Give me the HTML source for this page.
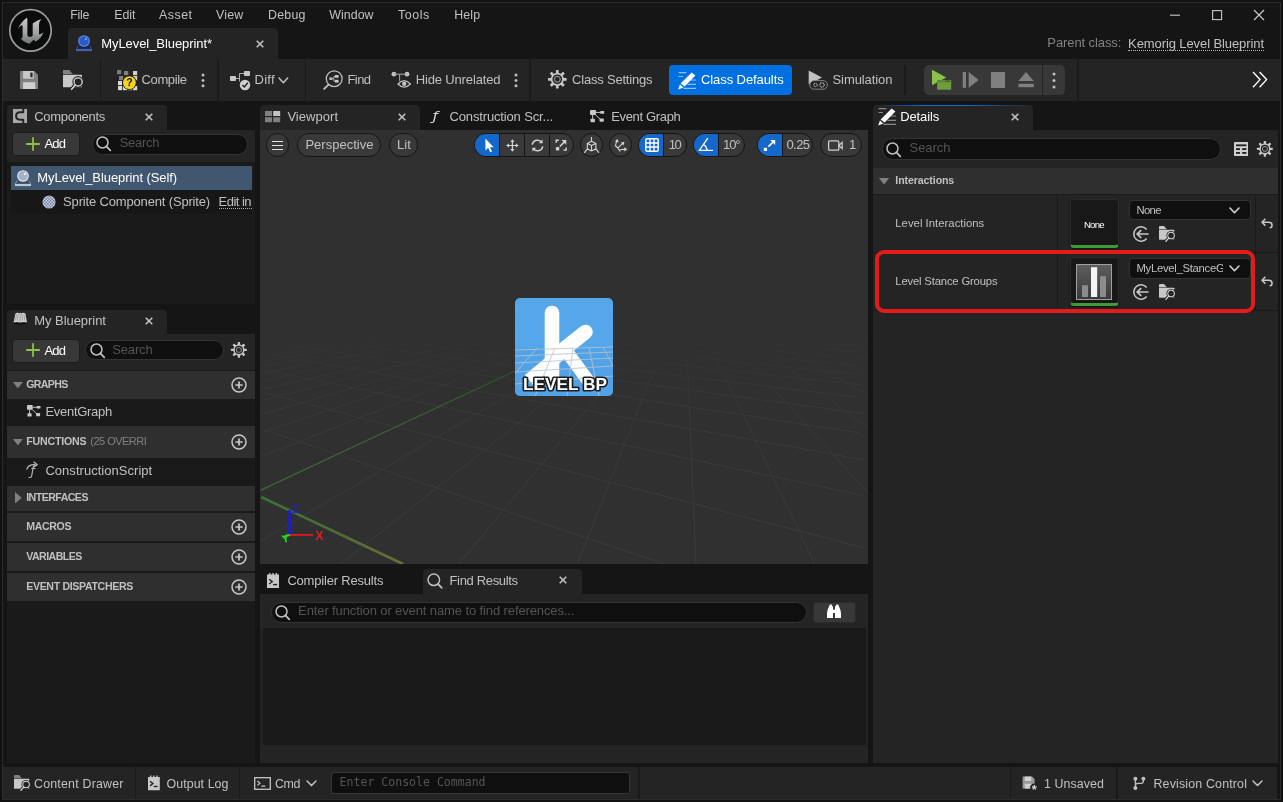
<!DOCTYPE html>
<html lang="en"><head><meta charset="utf-8"><title>MyLevel_Blueprint</title>
<style>
html,body{margin:0;padding:0;background:#111;}
body{width:1283px;height:802px;position:relative;overflow:hidden;font-family:"Liberation Sans",sans-serif;}
#app{position:absolute;left:0;top:0;width:1283px;height:802px;overflow:hidden;will-change:transform;}
#app div,#app span.t,#app svg{position:absolute;box-sizing:border-box;}
span.t{white-space:pre;display:block;}
</style></head><body><div id="app">
<div style="left:2px;top:2px;width:1279px;height:798px;background:#151515;border:1px solid #2c2c2c;"></div>
<span class="t" style="left:70.30px;top:9.00px;font-size:12.4px;line-height:12.4px;color:#c0c0c0;font-weight:400;letter-spacing:-0.327px;">File</span>
<span class="t" style="left:114.20px;top:9.00px;font-size:12.4px;line-height:12.4px;color:#c0c0c0;font-weight:400;letter-spacing:-0.056px;">Edit</span>
<span class="t" style="left:159.10px;top:9.00px;font-size:12.4px;line-height:12.4px;color:#c0c0c0;font-weight:400;letter-spacing:0.472px;">Asset</span>
<span class="t" style="left:216.00px;top:9.00px;font-size:12.4px;line-height:12.4px;color:#c0c0c0;font-weight:400;letter-spacing:0.182px;">View</span>
<span class="t" style="left:268.10px;top:9.00px;font-size:12.4px;line-height:12.4px;color:#c0c0c0;font-weight:400;letter-spacing:0.215px;">Debug</span>
<span class="t" style="left:329.20px;top:9.00px;font-size:12.4px;line-height:12.4px;color:#c0c0c0;font-weight:400;letter-spacing:0.059px;">Window</span>
<span class="t" style="left:398.00px;top:9.00px;font-size:12.4px;line-height:12.4px;color:#c0c0c0;font-weight:400;letter-spacing:0.588px;">Tools</span>
<span class="t" style="left:454.20px;top:9.00px;font-size:12.4px;line-height:12.4px;color:#c0c0c0;font-weight:400;letter-spacing:0.132px;">Help</span>
<div style="left:68px;top:28px;width:210px;height:31px;background:#242424;border-radius:4px 4px 0 0;"></div>
<span class="t" style="left:101.30px;top:37.00px;font-size:13px;line-height:13px;color:#ffffff;font-weight:400;letter-spacing:-0.077px;">MyLevel_Blueprint*</span>
<span class="t" style="left:1047.30px;top:36.00px;font-size:13px;line-height:13px;color:#828282;font-weight:400;letter-spacing:-0.087px;">Parent class:</span>
<span class="t" style="left:1128.10px;top:37.00px;font-size:13px;line-height:13px;color:#c0c0c0;font-weight:400;letter-spacing:-0.096px;">Kemorig Level Blueprint</span>
<div style="left:1128px;top:50px;width:136px;height:1px;background:transparent;border-top:1px dotted #b0b0b0;"></div>
<div style="left:3px;top:59px;width:1277px;height:42px;background:#242424;"></div>
<div style="left:99.5px;top:59px;width:1.5px;height:42px;background:#1a1a1a;"></div>
<div style="left:217px;top:59px;width:1.5px;height:42px;background:#1a1a1a;"></div>
<div style="left:304.9px;top:59px;width:1.5px;height:42px;background:#1a1a1a;"></div>
<div style="left:529.3px;top:59px;width:1.5px;height:42px;background:#1a1a1a;"></div>
<div style="left:1077.3px;top:59px;width:1.5px;height:42px;background:#1a1a1a;"></div>
<div style="left:904px;top:65px;width:1.5px;height:30px;background:#1a1a1a;"></div>
<span class="t" style="left:141.50px;top:73.00px;font-size:13px;line-height:13px;color:#c0c0c0;font-weight:400;letter-spacing:-0.364px;">Compile</span>
<span class="t" style="left:254.50px;top:73.00px;font-size:13px;line-height:13px;color:#c0c0c0;font-weight:400;letter-spacing:0.245px;">Diff</span>
<span class="t" style="left:347.50px;top:73.00px;font-size:13px;line-height:13px;color:#c0c0c0;font-weight:400;letter-spacing:-0.596px;">Find</span>
<span class="t" style="left:415.70px;top:73.00px;font-size:13px;line-height:13px;color:#c0c0c0;font-weight:400;letter-spacing:-0.147px;">Hide Unrelated</span>
<span class="t" style="left:572.00px;top:73.00px;font-size:13px;line-height:13px;color:#c0c0c0;font-weight:400;letter-spacing:-0.199px;">Class Settings</span>
<div style="left:669px;top:65px;width:123px;height:30px;background:#0070e0;border-radius:4px;"></div>
<span class="t" style="left:701.00px;top:73.00px;font-size:13px;line-height:13px;color:#ffffff;font-weight:400;letter-spacing:-0.085px;">Class Defaults</span>
<span class="t" style="left:832.50px;top:73.00px;font-size:13px;line-height:13px;color:#c0c0c0;font-weight:400;letter-spacing:-0.077px;">Simulation</span>
<div style="left:924px;top:65px;width:141px;height:30px;background:#383838;border-radius:5px;"></div>
<div style="left:1042px;top:65px;width:1px;height:30px;background:#242424;"></div>
<div style="left:7px;top:105px;width:160px;height:25px;background:#242424;border-radius:4px 4px 0 0;"></div>
<span class="t" style="left:34.20px;top:110.00px;font-size:13px;line-height:13px;color:#c0c0c0;font-weight:400;letter-spacing:-0.290px;">Components</span>
<div style="left:7px;top:130px;width:248px;height:32px;background:#242424;"></div>
<div style="left:7px;top:162px;width:248px;height:142px;background:#1a1a1a;"></div>
<div style="left:11.5px;top:132.0px;width:68.5px;height:24px;background:#383838;border-radius:4px;border:1px solid #1c1c1c;"></div>
<span class="t" style="left:44.40px;top:137.00px;font-size:13px;line-height:13px;color:#ffffff;font-weight:400;letter-spacing:-0.716px;">Add</span>
<div style="left:92px;top:134px;width:156px;height:20.5px;background:#0f0f0f;border-radius:10.25px;border:1px solid #333;"></div>
<span class="t" style="left:119.70px;top:136.00px;font-size:13px;line-height:13px;color:#545454;font-weight:400;letter-spacing:-0.258px;">Search</span>
<div style="left:11px;top:166px;width:240.5px;height:24px;background:#40576f;"></div>
<span class="t" style="left:37.30px;top:171.00px;font-size:13px;line-height:13px;color:#ffffff;font-weight:400;letter-spacing:-0.075px;">MyLevel_Blueprint (Self)</span>
<div style="left:11px;top:190px;width:240.5px;height:24px;background:#171717;"></div>
<span class="t" style="left:63.10px;top:195.00px;font-size:13px;line-height:13px;color:#c0c0c0;font-weight:400;letter-spacing:-0.163px;">Sprite Component (Sprite)</span>
<span class="t" style="left:218.50px;top:195.00px;font-size:13px;line-height:13px;color:#c0c0c0;font-weight:400;letter-spacing:-0.505px;width:33px;overflow:hidden;">Edit in</span>
<div style="left:218.5px;top:208px;width:33px;height:1px;background:transparent;border-top:1px dotted #b0b0b0;"></div>
<div style="left:7px;top:309.5px;width:160px;height:24.5px;background:#242424;border-radius:4px 4px 0 0;"></div>
<span class="t" style="left:34.20px;top:314.00px;font-size:13px;line-height:13px;color:#c0c0c0;font-weight:400;letter-spacing:-0.041px;">My Blueprint</span>
<div style="left:7px;top:334px;width:248px;height:37px;background:#242424;"></div>
<div style="left:7px;top:369.5px;width:248px;height:393.5px;background:#1a1a1a;"></div>
<div style="left:11.5px;top:338.5px;width:68.5px;height:24.5px;background:#383838;border-radius:4px;border:1px solid #1c1c1c;"></div>
<span class="t" style="left:44.40px;top:344.00px;font-size:13px;line-height:13px;color:#ffffff;font-weight:400;letter-spacing:-0.716px;">Add</span>
<div style="left:84.8px;top:339.8px;width:139.6px;height:20.7px;background:#0f0f0f;border-radius:10.35px;border:1px solid #333;"></div>
<span class="t" style="left:112.20px;top:343.00px;font-size:13px;line-height:13px;color:#545454;font-weight:400;letter-spacing:-0.138px;">Search</span>
<div style="left:7px;top:371px;width:248px;height:28px;background:#2f2f2f;"></div>
<span class="t" style="left:26.20px;top:379.00px;font-size:10.6px;line-height:10.6px;color:#c0c0c0;font-weight:700;letter-spacing:-0.650px;">GRAPHS</span>
<span class="t" style="left:45.40px;top:405.00px;font-size:13px;line-height:13px;color:#c0c0c0;font-weight:400;letter-spacing:-0.286px;">EventGraph</span>
<div style="left:7px;top:426px;width:248px;height:32px;background:#2f2f2f;"></div>
<span class="t" style="left:26.20px;top:436.00px;font-size:10.6px;line-height:10.6px;color:#c0c0c0;font-weight:700;letter-spacing:-0.179px;">FUNCTIONS</span>
<span class="t" style="left:90.30px;top:436.00px;font-size:11px;line-height:11px;color:#808080;font-weight:400;letter-spacing:-0.525px;">(25 OVERRI</span>
<span class="t" style="left:45.40px;top:464.00px;font-size:13px;line-height:13px;color:#c0c0c0;font-weight:400;letter-spacing:0.035px;">ConstructionScript</span>
<div style="left:7px;top:485.5px;width:248px;height:25px;background:#2f2f2f;"></div>
<span class="t" style="left:26.20px;top:492.00px;font-size:10.6px;line-height:10.6px;color:#c0c0c0;font-weight:700;letter-spacing:-0.538px;">INTERFACES</span>
<div style="left:7px;top:513px;width:248px;height:28px;background:#2f2f2f;"></div>
<span class="t" style="left:26.20px;top:521.00px;font-size:10.6px;line-height:10.6px;color:#c0c0c0;font-weight:700;letter-spacing:-0.342px;">MACROS</span>
<div style="left:7px;top:543px;width:248px;height:28px;background:#2f2f2f;"></div>
<span class="t" style="left:26.20px;top:551.00px;font-size:10.6px;line-height:10.6px;color:#c0c0c0;font-weight:700;letter-spacing:-0.545px;">VARIABLES</span>
<div style="left:7px;top:573px;width:248px;height:28px;background:#2f2f2f;"></div>
<span class="t" style="left:26.20px;top:581.00px;font-size:10.6px;line-height:10.6px;color:#c0c0c0;font-weight:700;letter-spacing:-0.343px;">EVENT DISPATCHERS</span>
<div style="left:260px;top:105px;width:160px;height:25px;background:#242424;border-radius:4px 4px 0 0;"></div>
<span class="t" style="left:287.40px;top:110.00px;font-size:13px;line-height:13px;color:#c0c0c0;font-weight:400;letter-spacing:0.037px;">Viewport</span>
<span class="t" style="left:449.50px;top:110.00px;font-size:13px;line-height:13px;color:#c0c0c0;font-weight:400;letter-spacing:-0.151px;">Construction Scr...</span>
<span class="t" style="left:611.20px;top:110.00px;font-size:13px;line-height:13px;color:#c0c0c0;font-weight:400;letter-spacing:-0.339px;">Event Graph</span>
<div style="left:260px;top:130px;width:608px;height:434px;background:#303030;"></div>
<svg style="left:260px;top:160px;" width="608" height="404" viewBox="0 0 608 404"><defs><linearGradient id="fade" x1="0" y1="0" x2="0" y2="1"><stop offset="0" stop-color="#fff" stop-opacity="0"/><stop offset="0.38" stop-color="#fff" stop-opacity="0"/><stop offset="0.62" stop-color="#fff" stop-opacity="0.75"/><stop offset="1" stop-color="#fff" stop-opacity="1"/></linearGradient><mask id="fm" maskUnits="userSpaceOnUse" x="0" y="0" width="608" height="404"><rect x="0" y="0" width="608" height="404" fill="url(#fade)"/></mask><linearGradient id="gy" gradientUnits="userSpaceOnUse" x1="0" y1="336" x2="150" y2="404"><stop offset="0" stop-color="#3f8a3a"/><stop offset="0.5" stop-color="#5a843a"/><stop offset="1" stop-color="#8a8440"/></linearGradient></defs><g mask="url(#fm)"><g stroke="#3e3e3e" stroke-width="1" opacity="0.9"><line x1="384.5" y1="136.9" x2="3.9" y2="188.6"/><line x1="386.9" y1="136.9" x2="0.6" y2="192.7"/><line x1="389.3" y1="136.9" x2="0.7" y2="196.8"/><line x1="391.6" y1="136.9" x2="4.5" y2="200.9"/><line x1="394.0" y1="136.9" x2="4.1" y2="206.4"/><line x1="396.4" y1="136.9" x2="1.4" y2="213.2"/><line x1="398.8" y1="136.9" x2="4.7" y2="220.0"/><line x1="401.1" y1="136.9" x2="2.1" y2="229.5"/><line x1="403.5" y1="136.9" x2="2.6" y2="240.4"/><line x1="405.9" y1="136.9" x2="3.1" y2="254.1"/><line x1="408.2" y1="136.9" x2="3.3" y2="271.8"/><line x1="410.6" y1="136.9" x2="1.3" y2="296.3"/><line x1="415.3" y1="136.9" x2="1.3" y2="380.8"/><line x1="417.7" y1="136.9" x2="80.5" y2="404.0"/><line x1="420.1" y1="136.9" x2="199.0" y2="404.0"/><line x1="422.5" y1="136.9" x2="317.5" y2="404.0"/><line x1="424.8" y1="136.9" x2="436.0" y2="404.0"/><line x1="427.2" y1="136.9" x2="554.5" y2="404.0"/><line x1="429.6" y1="136.9" x2="608.4" y2="333.1"/><line x1="431.9" y1="136.9" x2="608.0" y2="267.7"/><line x1="434.3" y1="136.9" x2="606.6" y2="233.6"/><line x1="436.7" y1="136.9" x2="605.8" y2="213.2"/><line x1="439.0" y1="136.9" x2="605.2" y2="199.5"/><line x1="441.4" y1="136.9" x2="605.4" y2="190.0"/><line x1="443.8" y1="136.9" x2="606.9" y2="183.2"/><line x1="3.6" y1="269.9" x2="405.0" y2="404.0"/><line x1="3.4" y1="232.6" x2="603.5" y2="387.6"/><line x1="1.5" y1="208.8" x2="603.3" y2="335.5"/><line x1="8.0" y1="193.9" x2="603.7" y2="299.7"/><line x1="7.7" y1="182.0" x2="599.4" y2="272.9"/><line x1="8.4" y1="173.1" x2="603.0" y2="253.5"/><line x1="5.8" y1="165.6" x2="597.2" y2="237.1"/><line x1="3.7" y1="159.6" x2="603.4" y2="225.2"/><line x1="6.0" y1="155.2" x2="603.6" y2="214.8"/><line x1="0.5" y1="150.7" x2="601.8" y2="205.8"/><line x1="4.7" y1="147.7" x2="601.7" y2="198.4"/><line x1="3.6" y1="144.7" x2="607.5" y2="192.4"/><line x1="17.5" y1="143.2" x2="602.7" y2="186.5"/><line x1="7.3" y1="140.3" x2="587.5" y2="180.5"/><line x1="14.6" y1="138.8" x2="607.4" y2="177.5"/><line x1="19.3" y1="137.3" x2="598.0" y2="173.1"/><line x1="46.8" y1="137.3" x2="606.1" y2="170.1"/><line x1="74.3" y1="137.3" x2="582.2" y2="165.6"/><line x1="101.8" y1="137.3" x2="606.6" y2="164.1"/><line x1="129.4" y1="137.3" x2="599.0" y2="161.1"/><line x1="156.9" y1="137.3" x2="586.1" y2="158.1"/><line x1="184.4" y1="137.3" x2="600.0" y2="156.7"/><line x1="211.9" y1="137.3" x2="578.0" y2="153.7"/><line x1="239.4" y1="137.3" x2="585.3" y2="152.2"/><line x1="266.9" y1="137.3" x2="590.0" y2="150.7"/><line x1="294.4" y1="137.3" x2="592.1" y2="149.2"/><line x1="321.9" y1="137.3" x2="591.6" y2="147.7"/><line x1="349.4" y1="137.3" x2="588.4" y2="146.2"/><line x1="376.9" y1="137.3" x2="582.6" y2="144.7"/><line x1="404.4" y1="137.3" x2="574.2" y2="143.2"/><line x1="432.0" y1="137.3" x2="607.0" y2="143.2"/><line x1="459.5" y1="137.3" x2="594.7" y2="141.8"/><line x1="487.0" y1="137.3" x2="579.7" y2="140.3"/><line x1="514.5" y1="137.3" x2="562.2" y2="138.8"/><line x1="542.0" y1="137.3" x2="591.0" y2="138.8"/><line x1="569.5" y1="137.3" x2="569.5" y2="137.3"/><line x1="597.0" y1="137.3" x2="597.0" y2="137.3"/></g><line x1="413.0" y1="136.9" x2="0.4" y2="330.4" stroke="#3f6e3a" stroke-width="1.3"/></g><line x1="1.2" y1="337.0" x2="143.0" y2="404.0" stroke="url(#gy)" stroke-width="2.6" opacity="0.72"/></svg>
<svg style="left:278px;top:500px;" width="50" height="46" viewBox="0 0 50 46"><path d="M11.8 34.5V10" stroke="#1d1dd0" stroke-width="3"/><path d="M12 34.9H35" stroke="#d81a1a" stroke-width="1.9"/><path d="M12 35L5.4 36.6" stroke="#22e022" stroke-width="2"/><text x="14.6" y="13.2" font-family="Liberation Sans, sans-serif" font-weight="700" font-size="10.5" fill="#2222c4">Z</text><text x="37.4" y="40.2" font-family="Liberation Sans, sans-serif" font-weight="700" font-size="12" fill="#d82020">X</text><text x="3.6" y="42.4" font-family="Liberation Sans, sans-serif" font-weight="700" font-size="11" fill="#22e022" transform="rotate(-14 8 38)">Y</text></svg>
<svg style="left:515px;top:298px;" width="98" height="98" viewBox="0 0 98 98"><defs><clipPath id="spc"><rect x="0" y="0" width="98" height="98" rx="5"/></clipPath></defs><rect x="0" y="0" width="98" height="98" rx="5" fill="#55a7ea"/><g clip-path="url(#spc)"><rect x="0" y="50" width="98" height="48" fill="#4f9fe2" opacity="0.55"/><path d="M37 15V80" stroke="#fdfdfd" stroke-width="14.6" stroke-linecap="round" fill="none"/><path d="M44 55L70.5 34" stroke="#fdfdfd" stroke-width="14.6" stroke-linecap="round" fill="none"/><path d="M50 52L14 82" stroke="#fdfdfd" stroke-width="13" stroke-linecap="butt" fill="none"/><path d="M52 54L74 84" stroke="#fdfdfd" stroke-width="13" stroke-linecap="butt" fill="none"/><g stroke="#b9c4cc" stroke-width="1" fill="none" opacity="0.8"><path d="M0 52L98 49M0 58L98 54M0 65L98 60M0 74L98 68M0 86L98 78"/><path d="M22 50L-4 80M40 50L20 98M58 50L52 98M74 49L84 98M88 49L110 90"/></g></g><text x="50" y="92" text-anchor="middle" font-family="Liberation Sans, sans-serif" font-weight="700" font-size="16.6" letter-spacing="0" fill="#ffffff" stroke="#1e1e1e" stroke-width="3.2" stroke-linejoin="round" paint-order="stroke" textLength="84" lengthAdjust="spacingAndGlyphs" xml:space="preserve">LEVEL BP</text></svg>
<div style="left:266px;top:133px;width:23px;height:24px;background:#393939;border-radius:12.0px;border:1px solid #151515;"></div>
<div style="left:297.2px;top:133px;width:83.8px;height:24px;background:#393939;border-radius:12.0px;border:1px solid #151515;"></div>
<span class="t" style="left:305.40px;top:138.00px;font-size:13px;line-height:13px;color:#c0c0c0;font-weight:400;letter-spacing:0.018px;">Perspective</span>
<div style="left:389.2px;top:133px;width:28.7px;height:24px;background:#393939;border-radius:12.0px;border:1px solid #151515;"></div>
<span class="t" style="left:397.10px;top:138.00px;font-size:13px;line-height:13px;color:#c0c0c0;font-weight:400;letter-spacing:0.035px;">Lit</span>
<div style="left:473.5px;top:133px;width:100.2px;height:24px;background:#393939;border-radius:12.0px;border:1px solid #151515;"></div>
<div style="left:474.5px;top:134px;width:24.5px;height:22px;background:#1468cc;border-radius:11px 0 0 11px;"></div>
<div style="left:499px;top:134px;width:1px;height:22px;background:#151515;"></div>
<div style="left:524px;top:134px;width:1px;height:22px;background:#151515;"></div>
<div style="left:549px;top:134px;width:1px;height:22px;background:#151515;"></div>
<div style="left:579.7px;top:133px;width:23.6px;height:24px;background:#393939;border-radius:12.0px;border:1px solid #151515;"></div>
<div style="left:608.7px;top:133px;width:23.6px;height:24px;background:#393939;border-radius:12.0px;border:1px solid #151515;"></div>
<div style="left:638px;top:133px;width:48.7px;height:24px;background:#393939;border-radius:12.0px;border:1px solid #151515;"></div>
<div style="left:639px;top:134px;width:24px;height:22px;background:#1468cc;border-radius:11px 0 0 11px;"></div>
<div style="left:663px;top:134px;width:1px;height:22px;background:#151515;"></div>
<span class="t" style="left:668.70px;top:138.00px;font-size:13px;line-height:13px;color:#c0c0c0;font-weight:400;letter-spacing:-1.460px;">10</span>
<div style="left:692.7px;top:133px;width:52px;height:24px;background:#393939;border-radius:12.0px;border:1px solid #151515;"></div>
<div style="left:693.7px;top:134px;width:24.5px;height:22px;background:#1468cc;border-radius:11px 0 0 11px;"></div>
<div style="left:718.2px;top:134px;width:1px;height:22px;background:#151515;"></div>
<span class="t" style="left:723.00px;top:138.00px;font-size:13px;line-height:13px;color:#c0c0c0;font-weight:400;letter-spacing:-1.079px;">10°</span>
<div style="left:756.6px;top:133px;width:56.7px;height:24px;background:#393939;border-radius:12.0px;border:1px solid #151515;"></div>
<div style="left:757.6px;top:134px;width:24.5px;height:22px;background:#1468cc;border-radius:11px 0 0 11px;"></div>
<div style="left:782.1px;top:134px;width:1px;height:22px;background:#151515;"></div>
<span class="t" style="left:786.40px;top:138.00px;font-size:13px;line-height:13px;color:#c0c0c0;font-weight:400;letter-spacing:-0.534px;">0.25</span>
<div style="left:819.5px;top:133px;width:42.5px;height:24px;background:#393939;border-radius:12.0px;border:1px solid #151515;"></div>
<span class="t" style="left:849.00px;top:138.00px;font-size:13px;line-height:13px;color:#c0c0c0;font-weight:400;letter-spacing:-2.930px;">1</span>
<div style="left:422.5px;top:569px;width:159.5px;height:25px;background:#242424;border-radius:4px 4px 0 0;"></div>
<span class="t" style="left:287.40px;top:574.00px;font-size:13px;line-height:13px;color:#c0c0c0;font-weight:400;letter-spacing:-0.198px;">Compiler Results</span>
<span class="t" style="left:449.50px;top:574.00px;font-size:13px;line-height:13px;color:#c0c0c0;font-weight:400;letter-spacing:-0.341px;">Find Results</span>
<div style="left:260px;top:594px;width:608px;height:169px;background:#242424;"></div>
<div style="left:271px;top:601.5px;width:536px;height:21px;background:#0f0f0f;border-radius:10.5px;border:1px solid #333;"></div>
<span class="t" style="left:298.10px;top:604.00px;font-size:13px;line-height:13px;color:#545454;font-weight:400;letter-spacing:-0.111px;">Enter function or event name to find references...</span>
<div style="left:812.5px;top:601.5px;width:43.5px;height:21px;background:#383838;border-radius:3px;border:1px solid #2a2a2a;"></div>
<div style="left:262.5px;top:628px;width:603.3px;height:117px;background:#1a1a1a;"></div>
<div style="left:873px;top:105px;width:160px;height:25px;background:#242424;border-radius:4px 4px 0 0;"></div>
<div style="left:875px;top:104.6px;width:157px;height:1.2px;background:linear-gradient(90deg,rgba(16,100,196,0),#1268cc 30%,#1268cc 60%,rgba(16,100,196,0));"></div>
<span class="t" style="left:900.20px;top:110.00px;font-size:13px;line-height:13px;color:#ffffff;font-weight:400;letter-spacing:-0.106px;">Details</span>
<div style="left:873px;top:130px;width:404.5px;height:633px;background:#242424;"></div>
<div style="left:881.5px;top:138px;width:339px;height:21.5px;background:#0f0f0f;border-radius:10.75px;border:1px solid #333;"></div>
<span class="t" style="left:909.60px;top:141.00px;font-size:13px;line-height:13px;color:#545454;font-weight:400;letter-spacing:-0.078px;">Search</span>
<div style="left:873px;top:168px;width:404.5px;height:26px;background:#2f2f2f;"></div>
<span class="t" style="left:895.30px;top:175.00px;font-size:10.6px;line-height:10.6px;color:#c0c0c0;font-weight:700;letter-spacing:-0.098px;">Interactions</span>
<div style="left:873px;top:194px;width:404.5px;height:1px;background:#1a1a1a;"></div>
<div style="left:873px;top:252px;width:404.5px;height:1px;background:#1a1a1a;"></div>
<div style="left:873px;top:310px;width:404.5px;height:1px;background:#1a1a1a;"></div>
<div style="left:1057px;top:195px;width:1px;height:115px;background:#1a1a1a;"></div>
<div style="left:1254.5px;top:195px;width:1px;height:115px;background:#1a1a1a;"></div>
<span class="t" style="left:895.30px;top:218.00px;font-size:11.3px;line-height:11.3px;color:#c0c0c0;font-weight:400;letter-spacing:0.025px;">Level Interactions</span>
<span class="t" style="left:895.30px;top:276.00px;font-size:11.3px;line-height:11.3px;color:#c0c0c0;font-weight:400;letter-spacing:-0.179px;">Level Stance Groups</span>
<div style="left:1069.5px;top:199px;width:49px;height:49px;background:#181818;border-radius:4px;border:1px solid #2c2c2c;border-bottom:3px solid #3e9a37;box-shadow:0 1px 2px rgba(0,0,0,0.5);"></div>
<div style="left:1069.5px;top:257.4px;width:49px;height:49px;background:#181818;border-radius:4px;border:1px solid #2c2c2c;border-bottom:3px solid #3e9a37;box-shadow:0 1px 2px rgba(0,0,0,0.5);"></div>
<span class="t" style="left:1084.00px;top:220.00px;font-size:9.6px;line-height:9.6px;color:#ffffff;font-weight:400;letter-spacing:-0.817px;">None</span>
<div style="left:1128.5px;top:199.5px;width:122.5px;height:20.5px;background:#0f0f0f;border-radius:4px;border:1px solid #333;"></div>
<span class="t" style="left:1136.40px;top:205.00px;font-size:11.3px;line-height:11.3px;color:#c0c0c0;font-weight:400;letter-spacing:-0.638px;">None</span>
<div style="left:1128.5px;top:258px;width:122.5px;height:20.5px;background:#0f0f0f;border-radius:4px;border:1px solid #333;"></div>
<span class="t" style="left:1136.40px;top:263.00px;font-size:11.3px;line-height:11.3px;color:#c0c0c0;font-weight:400;letter-spacing:-0.281px;width:87px;overflow:hidden;">MyLevel_StanceG</span>
<div style="left:875px;top:250px;width:379.5px;height:63px;background:transparent;border:4.5px solid #e31b1b;border-radius:9px;"></div>
<div style="left:3px;top:767px;width:1274px;height:32px;background:#242424;"></div>
<div style="left:134.5px;top:767px;width:1.5px;height:32px;background:#1a1a1a;"></div>
<div style="left:238.5px;top:767px;width:1.5px;height:32px;background:#1a1a1a;"></div>
<div style="left:638px;top:767px;width:1.5px;height:32px;background:#1a1a1a;"></div>
<div style="left:1009.5px;top:767px;width:1.5px;height:32px;background:#1a1a1a;"></div>
<div style="left:1116px;top:767px;width:1.5px;height:32px;background:#1a1a1a;"></div>
<span class="t" style="left:34.00px;top:778.00px;font-size:12.4px;line-height:12.4px;color:#c0c0c0;font-weight:400;letter-spacing:0.205px;">Content Drawer</span>
<span class="t" style="left:166.50px;top:778.00px;font-size:12.4px;line-height:12.4px;color:#c0c0c0;font-weight:400;letter-spacing:0.071px;">Output Log</span>
<span class="t" style="left:275.00px;top:778.00px;font-size:12.4px;line-height:12.4px;color:#c0c0c0;font-weight:400;letter-spacing:-0.340px;">Cmd</span>
<div style="left:331px;top:772px;width:299px;height:21.5px;background:#0f0f0f;border-radius:3px;border:1px solid #383838;"></div>
<span class="t" style="left:339.60px;top:777.00px;font-size:11.55px;line-height:11.55px;color:#545454;font-weight:400;letter-spacing:-0.001px;font-family:&quot;DejaVu Sans Mono&quot;,&quot;Liberation Mono&quot;,monospace;">Enter Console Command</span>
<span class="t" style="left:1044.00px;top:778.00px;font-size:12.4px;line-height:12.4px;color:#c0c0c0;font-weight:400;letter-spacing:0.090px;">1 Unsaved</span>
<span class="t" style="left:1153.50px;top:778.00px;font-size:12.4px;line-height:12.4px;color:#c0c0c0;font-weight:400;letter-spacing:0.169px;">Revision Control</span>
<svg style="left:8px;top:8px;" width="46" height="46" viewBox="0 0 46 46"><defs><linearGradient id="ug" x1="0" y1="0" x2="0" y2="1"><stop offset="0" stop-color="#c9c9c9"/><stop offset="0.55" stop-color="#a6a6a6"/><stop offset="1" stop-color="#6f7574"/></linearGradient></defs><circle cx="22.5" cy="22.4" r="20.7" fill="#0b0b0b" stroke="#9c9c9c" stroke-width="1.7"/><path d="M9.5 21.2Q13.6 13.6 18.7 9.8Q19.4 10 19.4 11.4V27Q19.4 28.7 21 28.7H23.1Q24.7 28.7 24.7 27V15.4Q29 12.4 33.4 11Q31 13.6 31 16.4V26.6Q33.4 26.2 35.4 24.2Q33.4 30.4 27.6 33.6L25.6 31.8L21.6 35.7Q16 34.6 12.6 30.2Q14.6 30.8 14.6 28.4V18.6Q14.6 16.8 13.2 17.6Q11.2 19 9.5 21.2Z" fill="url(#ug)"/></svg>
<svg style="left:1168px;top:8px;" width="14" height="14" viewBox="0 0 14 14"><path d="M2 7.2H12" stroke="#c8c8c8" stroke-width="1.1"/></svg>
<svg style="left:1210px;top:8px;" width="14" height="14" viewBox="0 0 14 14"><rect x="2.6" y="2.6" width="9" height="9" fill="none" stroke="#c8c8c8" stroke-width="1.1"/></svg>
<svg style="left:1252px;top:7.5px;" width="14" height="14" viewBox="0 0 14 14"><path d="M2 2L12 12M12 2L2 12" stroke="#c8c8c8" stroke-width="1.2"/></svg>
<svg style="left:74px;top:32.9px;" width="20" height="20" viewBox="0 0 20 20"><path d="M4.6 12.4H15.4L18 16H2Z" fill="#16244e"/><path d="M4.4 12.6L2.2 16M15.6 12.6L17.8 16" stroke="#3a4f8a" stroke-width="0.9" fill="none"/><rect x="2" y="15.9" width="16.1" height="2.2" fill="#4a60a0"/><circle cx="10" cy="8" r="5.3" fill="#2a5cc8" stroke="#5a88ea" stroke-width="1.1"/><circle cx="11.9" cy="6" r="1.1" fill="#7aa4ff"/></svg>
<svg style="left:254px;top:37.5px;" width="12" height="12" viewBox="0 0 12 12"><path d="M2.7 2.7L9.3 9.3M9.3 2.7L2.7 9.3" stroke="#c0c0c0" stroke-width="1.6" fill="none"/></svg>
<svg style="left:20px;top:71px;" width="18" height="18" viewBox="0 0 18 18"><path d="M0 0H14.2L18 3.8V18H0Z" fill="#808080"/><rect x="3.1" y="0" width="10.7" height="7.7" fill="#c8c8c8"/><rect x="10.3" y="1.6" width="2.3" height="4.6" fill="#2a2a2a"/><rect x="3.1" y="11.2" width="12.2" height="6.8" fill="#d0d0d0"/></svg>
<svg style="left:63px;top:70px;" width="24.0" height="24.0" viewBox="0 0 24 24"><path d="M0 0.6Q0 0 0.6 0H6.3L9.7 4H0Z" fill="#808080"/><path d="M0 4.8H18.4Q19 4.8 19 5.4V17.3H0.6Q0 17.3 0 16.7Z" fill="#c8c8c8"/><circle cx="15.1" cy="11.9" r="5.8" fill="#242424"/><path d="M11.6 15.6L7.8 20" stroke="#242424" stroke-width="3.6" stroke-linecap="round"/><circle cx="15.1" cy="11.9" r="4.1" fill="#242424" stroke="#d8d8d8" stroke-width="1.3"/><path d="M12.2 15.2L8.6 19.2" stroke="#d8d8d8" stroke-width="1.6" stroke-linecap="round"/></svg>
<svg style="left:116px;top:69px;" width="24" height="24" viewBox="0 0 24 24"><rect x="1" y="1" width="4.2" height="4.2" fill="#7a7a7a"/><rect x="8" y="2" width="4.2" height="4.2" fill="#808080"/><rect x="17" y="2" width="4.2" height="4.2" fill="#d4d0c8"/><rect x="3" y="7" width="4.2" height="4.2" fill="#808080"/><rect x="17" y="7" width="4.2" height="4.2" fill="#d4d0c8"/><rect x="2" y="12" width="4.2" height="4.2" fill="#d8d8d8"/><rect x="2" y="17" width="4.2" height="4.2" fill="#d8d8d8"/><rect x="7" y="17" width="4.2" height="4.2" fill="#d8d8d8"/><rect x="17" y="17" width="4.2" height="4.2" fill="#d8d8d8"/><rect x="12" y="17" width="4.2" height="4.2" fill="#d8d8d8"/><circle cx="13.4" cy="13.6" r="7.3" fill="#1c1c1c"/><circle cx="13.4" cy="13.6" r="6.4" fill="#f3d31f"/><text x="13.4" y="17.4" text-anchor="middle" font-family="Liberation Sans, sans-serif" font-weight="700" font-size="10.5" fill="#111">?</text></svg>
<svg style="left:199px;top:71.5px;" width="8" height="17.799999999999997" viewBox="0 0 8 17.799999999999997"><circle cx="4" cy="3.0" r="1.5" fill="#c0c0c0"/><circle cx="4" cy="8.400000000000006" r="1.5" fill="#c0c0c0"/><circle cx="4" cy="13.799999999999997" r="1.5" fill="#c0c0c0"/></svg>
<svg style="left:229px;top:70px;" width="24" height="22" viewBox="0 0 24 22"><rect x="1" y="6" width="6" height="5" rx="1" fill="#c8c8c8"/><rect x="15" y="1" width="6" height="5" rx="1" fill="#c8c8c8"/><path d="M7 8.5H10.5M10.5 11.5V3.5H15" fill="none" stroke="#b0b0b0" stroke-width="1"/><circle cx="16" cy="15" r="5.2" fill="#d0d0d0"/><path d="M13.4 15L15.4 17L18.8 12.8" fill="none" stroke="#242424" stroke-width="1.5"/></svg>
<svg style="left:277.3px;top:75.8px;" width="12.699999999999989" height="8.799999999999997" viewBox="0 0 12.699999999999989 8.799999999999997"><path d="M2 2L6.349999999999994 6.799999999999997L10.699999999999989 2" fill="none" stroke="#c0c0c0" stroke-width="1.5" stroke-linecap="round" stroke-linejoin="round"/></svg>
<svg style="left:320px;top:68px;" width="26" height="26" viewBox="0 0 26 26"><circle cx="14.2" cy="10.7" r="7.9" fill="none" stroke="#c0c0c0" stroke-width="1.3"/><path d="M8.6 16.6L3.6 21.4" stroke="#c0c0c0" stroke-width="1.9" stroke-linecap="butt"/><rect x="9.4" y="9.4" width="3" height="2.6" fill="#c0c0c0"/><rect x="15" y="7" width="3.6" height="2.8" fill="#c8c8c8"/><rect x="15" y="11.8" width="3.6" height="2.8" fill="#c8c8c8"/><path d="M12.4 10.7H13.8M13.8 8.4V13.2M13.8 8.4H15M13.8 13.2H15" stroke="#c0c0c0" stroke-width="0.9" fill="none"/></svg>
<svg style="left:390px;top:70px;" width="22" height="20" viewBox="0 0 22 20"><circle cx="3.9" cy="4.2" r="2.4" fill="#c0c0c0"/><circle cx="17" cy="4.2" r="2.4" fill="#c0c0c0"/><path d="M4 4.2H17M9.6 4.2V10.4Q9.6 12 11 12.4" fill="none" stroke="#a8a8a8" stroke-width="1"/><path d="M8 14Q14.1 7.4 20.4 14Q14.1 20.4 8 14Z" fill="#242424" stroke="#c0c0c0" stroke-width="1.3"/><circle cx="14.2" cy="13.8" r="2.2" fill="#c0c0c0"/></svg>
<svg style="left:512px;top:71.5px;" width="8" height="17.799999999999997" viewBox="0 0 8 17.799999999999997"><circle cx="4" cy="3.0" r="1.5" fill="#c0c0c0"/><circle cx="4" cy="8.400000000000006" r="1.5" fill="#c0c0c0"/><circle cx="4" cy="13.799999999999997" r="1.5" fill="#c0c0c0"/></svg>
<svg style="left:546.8000000000001px;top:69.3px;" width="20.6" height="20.6" viewBox="0 0 20.6 20.6"><g transform="translate(10.3 10.3) scale(1.0)"><rect x="-1.35" y="-9.3" width="2.7" height="3.6" rx="0.5" fill="#c8c8c8" transform="rotate(0.0)"/><rect x="-1.35" y="-9.3" width="2.7" height="3.6" rx="0.5" fill="#c8c8c8" transform="rotate(45.0)"/><rect x="-1.35" y="-9.3" width="2.7" height="3.6" rx="0.5" fill="#c8c8c8" transform="rotate(90.0)"/><rect x="-1.35" y="-9.3" width="2.7" height="3.6" rx="0.5" fill="#c8c8c8" transform="rotate(135.0)"/><rect x="-1.35" y="-9.3" width="2.7" height="3.6" rx="0.5" fill="#c8c8c8" transform="rotate(180.0)"/><rect x="-1.35" y="-9.3" width="2.7" height="3.6" rx="0.5" fill="#c8c8c8" transform="rotate(225.0)"/><rect x="-1.35" y="-9.3" width="2.7" height="3.6" rx="0.5" fill="#c8c8c8" transform="rotate(270.0)"/><rect x="-1.35" y="-9.3" width="2.7" height="3.6" rx="0.5" fill="#c8c8c8" transform="rotate(315.0)"/><circle r="5.7" fill="none" stroke="#c8c8c8" stroke-width="1.7"/><circle r="2.9" fill="none" stroke="#8a8a8a" stroke-width="1.2"/></g></svg>
<svg style="left:677.6px;top:71.8px;" width="19" height="18" viewBox="0 0 19 18"><path d="M0.6 0.6H8.4M0.6 4.5H5M12 8H18M9.4 12.3H18M5.4 16.4H18" stroke="#8cc0f6" stroke-width="1.2" fill="none"/><path d="M13.6 0.4L17.4 3.6L6.6 14.4L2.6 11.4Z" fill="#ffffff"/><path d="M1.9 12.6L5.4 15.4L0.2 17.4Z" fill="#ffffff"/></svg>
<svg style="left:807px;top:69px;" width="23" height="22" viewBox="0 0 23 22"><path d="M1.7 1.4V15.6L15 8.5Z" fill="#c0c0c0"/><rect x="2.8" y="11.6" width="17.6" height="8.6" rx="4.3" fill="#242424" stroke="#9a9a9a" stroke-width="0.8"/><circle cx="8.4" cy="15.9" r="1.7" fill="none" stroke="#b0b0b0" stroke-width="1.2" stroke-dasharray="0.9 0.6"/><circle cx="15" cy="15.9" r="2.2" fill="none" stroke="#b8b8b8" stroke-width="1.3" stroke-dasharray="0.9 0.6"/></svg>
<svg style="left:930px;top:68px;" width="24" height="24" viewBox="0 0 24 24"><path d="M2 1.8V17.3L16.3 9.5Z" fill="#8bc24a"/><rect x="7.2" y="12" width="14" height="9.7" fill="#6f9c3d"/><rect x="7.2" y="12" width="14" height="2.4" fill="#5d8731"/><path d="M15.6 13.2H20" stroke="#2c3d1a" stroke-width="0.9" stroke-dasharray="0.9 0.7"/></svg>
<svg style="left:962px;top:71px;" width="18" height="18" viewBox="0 0 18 18"><rect x="0.7" y="1" width="3.3" height="15.8" fill="#808080"/><path d="M6.7 1V16.8L16.6 8.9Z" fill="#808080"/></svg>
<div style="left:991.2px;top:72px;width:13.8px;height:15.8px;background:#808080;"></div>
<svg style="left:1018px;top:71px;" width="17" height="18" viewBox="0 0 17 18"><path d="M8 1L15.8 10H0.4Z" fill="#808080"/><rect x="0.4" y="12.8" width="15.4" height="3.4" fill="#808080"/></svg>
<svg style="left:1049.9px;top:70.6px;" width="8" height="19.900000000000006" viewBox="0 0 8 19.900000000000006"><circle cx="4" cy="3.0" r="1.5" fill="#c0c0c0"/><circle cx="4" cy="9.400000000000006" r="1.5" fill="#c0c0c0"/><circle cx="4" cy="15.900000000000006" r="1.5" fill="#c0c0c0"/></svg>
<svg style="left:1251px;top:70px;" width="19" height="20" viewBox="0 0 19 20"><path d="M2 2L9 9.6L2 17.2M8.6 2L15.6 9.6L8.6 17.2" fill="none" stroke="#ffffff" stroke-width="1.4"/></svg>
<svg style="left:13px;top:109px;" width="14" height="14" viewBox="0 0 14 14"><rect width="14" height="14" fill="#a8a8a8"/><path d="M10.3 0V3.3H7Q3.1 3.3 3.1 7Q3.1 10.7 7 10.7H10.3V14" fill="none" stroke="#242424" stroke-width="1.9" stroke-linejoin="round"/></svg>
<svg style="left:143.2px;top:110.8px;" width="12" height="12" viewBox="0 0 12 12"><path d="M2.7 2.7L9.3 9.3M9.3 2.7L2.7 9.3" stroke="#c0c0c0" stroke-width="1.6" fill="none"/></svg>
<svg style="left:24.9px;top:135.9px;" width="16" height="16" viewBox="0 0 16 16"><path d="M8 1.2000000000000002V14.8M1.2000000000000002 8H14.8" stroke="#8bc24a" stroke-width="1.8"/></svg>
<svg style="left:95.3px;top:135.2px;" width="22.5" height="22.5" viewBox="0 0 22.5 22.5"><circle cx="7.5" cy="7.5" r="5.5" fill="none" stroke="#c0c0c0" stroke-width="1.5"/><line x1="11.39" y1="11.39" x2="15.28" y2="15.28" stroke="#c0c0c0" stroke-width="1.8" stroke-linecap="round"/></svg>
<svg style="left:13.100000000000001px;top:167.9px;" width="20" height="20" viewBox="0 0 20 20"><path d="M4.6 12.4H15.4L18 16H2Z" fill="#3a4d63"/><path d="M4.4 12.6L2.2 16M15.6 12.6L17.8 16" stroke="#8fa0b4" stroke-width="0.9" fill="none"/><rect x="2" y="15.9" width="16.1" height="2.2" fill="#b9c6d6"/><circle cx="10" cy="8" r="5.3" fill="#a4b2c6" stroke="#dfe6ee" stroke-width="1.1"/><circle cx="11.9" cy="6" r="1.1" fill="#ffffff"/></svg>
<svg style="left:41px;top:194px;" width="16" height="16" viewBox="0 0 16 16"><defs><pattern id="ck" width="3" height="3" patternUnits="userSpaceOnUse"><rect width="3" height="3" fill="#d4d8e4"/><rect width="1.5" height="1.5" fill="#6c7aa0"/><rect x="1.5" y="1.5" width="1.5" height="1.5" fill="#6c7aa0"/></pattern></defs><circle cx="8" cy="8" r="6.6" fill="url(#ck)"/></svg>
<svg style="left:12.5px;top:312px;" width="15" height="13" viewBox="0 0 15 13"><path d="M0.6 10.4L2.4 1.4Q4.6 0.2 6.8 1.4L7.2 0.2L8 1.4Q10.4 0.2 12.4 1.4L14 10.4Q10.6 9.6 7.4 10.6Q4 9.6 0.6 10.4Z" fill="#d0d0d0"/><path d="M3.4 2.4L2.6 8.6M5 2.2L4.6 8.6M9 2.2L9.6 8.6M11 2.4L11.8 8.6M7.2 1.6V9.8" stroke="#8a8a8a" stroke-width="0.7"/><path d="M0.8 11.2Q4 10.4 7.4 11.6Q10.8 10.4 14 11.2V12.2Q10.8 11.6 7.4 12.8Q4 11.6 0.8 12.2Z" fill="#0c0c0c"/></svg>
<svg style="left:143.2px;top:315.4px;" width="12" height="12" viewBox="0 0 12 12"><path d="M2.7 2.7L9.3 9.3M9.3 2.7L2.7 9.3" stroke="#c0c0c0" stroke-width="1.6" fill="none"/></svg>
<svg style="left:24.9px;top:342.3px;" width="16" height="16" viewBox="0 0 16 16"><path d="M8 1.2000000000000002V14.8M1.2000000000000002 8H14.8" stroke="#8bc24a" stroke-width="1.8"/></svg>
<svg style="left:88.7px;top:341.5px;" width="22.5" height="22.5" viewBox="0 0 22.5 22.5"><circle cx="7.5" cy="7.5" r="5.5" fill="none" stroke="#c0c0c0" stroke-width="1.5"/><line x1="11.39" y1="11.39" x2="15.28" y2="15.28" stroke="#c0c0c0" stroke-width="1.8" stroke-linecap="round"/></svg>
<svg style="left:230.1px;top:341.3px;" width="17.8" height="17.8" viewBox="0 0 17.8 17.8"><g transform="translate(8.9 8.9) scale(0.8494623655913979)"><rect x="-1.35" y="-9.3" width="2.7" height="3.6" rx="0.5" fill="#c8c8c8" transform="rotate(0.0)"/><rect x="-1.35" y="-9.3" width="2.7" height="3.6" rx="0.5" fill="#c8c8c8" transform="rotate(45.0)"/><rect x="-1.35" y="-9.3" width="2.7" height="3.6" rx="0.5" fill="#c8c8c8" transform="rotate(90.0)"/><rect x="-1.35" y="-9.3" width="2.7" height="3.6" rx="0.5" fill="#c8c8c8" transform="rotate(135.0)"/><rect x="-1.35" y="-9.3" width="2.7" height="3.6" rx="0.5" fill="#c8c8c8" transform="rotate(180.0)"/><rect x="-1.35" y="-9.3" width="2.7" height="3.6" rx="0.5" fill="#c8c8c8" transform="rotate(225.0)"/><rect x="-1.35" y="-9.3" width="2.7" height="3.6" rx="0.5" fill="#c8c8c8" transform="rotate(270.0)"/><rect x="-1.35" y="-9.3" width="2.7" height="3.6" rx="0.5" fill="#c8c8c8" transform="rotate(315.0)"/><circle r="5.7" fill="none" stroke="#c8c8c8" stroke-width="1.7"/><circle r="2.9" fill="none" stroke="#8a8a8a" stroke-width="1.2"/></g></svg>
<svg style="left:13.1px;top:381.8px;" width="9.799999999999999" height="6.399999999999977" viewBox="0 0 9.799999999999999 6.399999999999977"><path d="M0 0H9.799999999999999L4.8999999999999995 6.399999999999977Z" fill="#808080"/></svg>
<svg style="left:13.1px;top:438.8px;" width="9.799999999999999" height="6.399999999999977" viewBox="0 0 9.799999999999999 6.399999999999977"><path d="M0 0H9.799999999999999L4.8999999999999995 6.399999999999977Z" fill="#808080"/></svg>
<svg style="left:15px;top:491.8px;" width="6.600000000000001" height="11.599999999999966" viewBox="0 0 6.600000000000001 11.599999999999966"><path d="M0 0V11.599999999999966L6.600000000000001 5.799999999999983Z" fill="#808080"/></svg>
<svg style="left:230px;top:375.6px;" width="18" height="18" viewBox="0 0 18 18"><circle cx="9" cy="9" r="7" fill="none" stroke="#c8c8c8" stroke-width="1.5"/><path d="M9 5.4V12.6M5.4 9H12.6" stroke="#c8c8c8" stroke-width="1.7"/></svg>
<svg style="left:230px;top:432.6px;" width="18" height="18" viewBox="0 0 18 18"><circle cx="9" cy="9" r="7" fill="none" stroke="#c8c8c8" stroke-width="1.5"/><path d="M9 5.4V12.6M5.4 9H12.6" stroke="#c8c8c8" stroke-width="1.7"/></svg>
<svg style="left:230px;top:517.8px;" width="18" height="18" viewBox="0 0 18 18"><circle cx="9" cy="9" r="7" fill="none" stroke="#c8c8c8" stroke-width="1.5"/><path d="M9 5.4V12.6M5.4 9H12.6" stroke="#c8c8c8" stroke-width="1.7"/></svg>
<svg style="left:230px;top:547.6px;" width="18" height="18" viewBox="0 0 18 18"><circle cx="9" cy="9" r="7" fill="none" stroke="#c8c8c8" stroke-width="1.5"/><path d="M9 5.4V12.6M5.4 9H12.6" stroke="#c8c8c8" stroke-width="1.7"/></svg>
<svg style="left:230px;top:577.6px;" width="18" height="18" viewBox="0 0 18 18"><circle cx="9" cy="9" r="7" fill="none" stroke="#c8c8c8" stroke-width="1.5"/><path d="M9 5.4V12.6M5.4 9H12.6" stroke="#c8c8c8" stroke-width="1.7"/></svg>
<svg style="left:26.6px;top:404.6px;" width="15.2" height="13.299999999999999" viewBox="0 0 16 14"><rect x="0" y="0" width="6" height="5" rx="0.8" fill="#c8c8c8"/><rect x="10.2" y="1" width="4" height="2.8" rx="0.6" fill="#c8c8c8"/><rect x="0.5" y="8.8" width="4.4" height="3.4" rx="0.6" fill="#c8c8c8"/><rect x="9.6" y="8.4" width="4.2" height="3.4" rx="0.6" fill="#c8c8c8"/><path d="M6 2.4H10.4M2.7 5V9M5.4 4.6L10 9.2" stroke="#c8c8c8" stroke-width="1" fill="none"/></svg>
<svg style="left:25px;top:461px;" width="18" height="18" viewBox="0 0 18 18"><path d="M1.6 8.6Q3.2 3.2 10.4 3.6" fill="none" stroke="#b8b8b8" stroke-width="1.2"/><path d="M8.6 0.8L12.2 3.8L8.4 6.2" fill="none" stroke="#b8b8b8" stroke-width="1.2"/><text x="5.4" y="14.2" font-family="DejaVu Sans, sans-serif" font-style="italic" font-size="12.6" fill="#b4b4b4">ƒ</text></svg>
<svg style="left:265px;top:111px;" width="16" height="12" viewBox="0 0 16 12"><rect x="0" y="0" width="7" height="5" fill="#808080"/><rect x="8.2" y="0" width="7" height="5" fill="#c4c4c4"/><rect x="0" y="6.2" width="7" height="5" fill="#808080"/><rect x="8.2" y="6.2" width="7" height="5" fill="#808080"/></svg>
<svg style="left:395.7px;top:110.8px;" width="12" height="12" viewBox="0 0 12 12"><path d="M2.7 2.7L9.3 9.3M9.3 2.7L2.7 9.3" stroke="#c0c0c0" stroke-width="1.6" fill="none"/></svg>
<svg style="left:426px;top:106px;" width="20" height="20" viewBox="0 0 20 20"><text x="5.2" y="14.2" transform="scale(1.25 1)" font-family="DejaVu Sans, sans-serif" font-style="italic" font-size="12.8" fill="#d0d0d0">ƒ</text></svg>
<svg style="left:589.8px;top:110px;" width="16.0" height="14.0" viewBox="0 0 16 14"><rect x="0" y="0" width="6" height="5" rx="0.8" fill="#c8c8c8"/><rect x="10.2" y="1" width="4" height="2.8" rx="0.6" fill="#c8c8c8"/><rect x="0.5" y="8.8" width="4.4" height="3.4" rx="0.6" fill="#c8c8c8"/><rect x="9.6" y="8.4" width="4.2" height="3.4" rx="0.6" fill="#c8c8c8"/><path d="M6 2.4H10.4M2.7 5V9M5.4 4.6L10 9.2" stroke="#c8c8c8" stroke-width="1" fill="none"/></svg>
<svg style="left:271px;top:139px;" width="14" height="12" viewBox="0 0 14 12"><path d="M1 2.5H12M1 6.5H12M1 10.5H12" stroke="#e2e2e2" stroke-width="1"/></svg>
<svg style="left:480px;top:136.8px;" width="14" height="17" viewBox="0 0 14 17"><path d="M5.4 1.6V13.4L8.2 10.8L10.2 15.2L12 14.4L10 10.2H13.6Z" fill="#ffffff"/></svg>
<svg style="left:505px;top:138px;" width="15" height="15" viewBox="0 0 15 15"><path d="M7.4 3V12M2.9 7.5H11.9" stroke="#d4d4d4" stroke-width="1.2"/><path d="M5.3 4L7.4 1.2L9.5 4ZM5.3 11L7.4 13.8L9.5 11ZM3.9 5.4L1.1 7.5L3.9 9.6ZM10.9 5.4L13.7 7.5L10.9 9.6Z" fill="#d4d4d4"/></svg>
<svg style="left:530px;top:138px;" width="15" height="15" viewBox="0 0 15 15"><path d="M2.2 6.6A5.4 5.4 0 0 1 12 4.6M12.8 8.4A5.4 5.4 0 0 1 3 10.4" fill="none" stroke="#d0d0d0" stroke-width="1.5"/><path d="M12.6 1.4V5.2H8.8Z" fill="#d0d0d0"/><path d="M2.4 13.6V9.8H6.2Z" fill="#d0d0d0"/></svg>
<svg style="left:554.6px;top:139.3px;" width="13" height="13" viewBox="0 0 13 13"><g transform="scale(0.88)"><path d="M1.4 4.4V1.4H4.4M9.6 12.6H12.6V9.6" fill="none" stroke="#d4d4d4" stroke-width="1.6"/><rect x="1" y="9.2" width="3.8" height="3.8" fill="#d4d4d4"/><path d="M5.4 8.6L11.6 2.4" stroke="#d4d4d4" stroke-width="1.7"/><path d="M7.4 1.2H12.8V6.6Z" fill="#d4d4d4"/></g></svg>
<svg style="left:583px;top:137px;" width="18" height="17" viewBox="0 0 18 17"><path d="M8.5 0V4.2M8.5 4.2L12.9 6.6V11.8L8.5 14L4.3 11.8V6.6ZM8.5 8.6L4.3 6.6M8.5 8.6L12.9 6.6M8.5 8.6V14M4.3 11.8L1.2 15.8M12.9 11.8L16 15.8" fill="none" stroke="#d4d4d4" stroke-width="1.1"/></svg>
<svg style="left:612px;top:137px;" width="18" height="17" viewBox="0 0 18 17"><path d="M2.8 8.4Q6 9.8 8.2 14.6M3.6 8.2L4.9 3.4M6.2 10.6L11 6.2M8.4 12.6L13.6 12.3" fill="none" stroke="#d4d4d4" stroke-width="1.1"/><path d="M3 4.8L5.2 1.8L6.8 5.2ZM8.8 5.4L12.4 4.8L11.6 8.4ZM12.2 10.2L15.2 12.2L12.4 14.4Z" fill="#d4d4d4"/></svg>
<svg style="left:644.6px;top:138.3px;" width="14" height="14" viewBox="0 0 14 14"><rect x="0.8" y="0.8" width="12.4" height="12.4" rx="1.2" fill="none" stroke="#ffffff" stroke-width="1.4"/><path d="M5 1V13M9 1V13M1 5H13M1 9H13" stroke="#ffffff" stroke-width="1.3"/></svg>
<svg style="left:697.4px;top:136px;" width="18" height="17" viewBox="0 0 18 17"><path d="M10.8 2.2L2.4 14.4H16" fill="none" stroke="#ffffff" stroke-width="1.3"/><path d="M6.4 8.6Q9.6 10.4 10.2 14.4" fill="none" stroke="#ffffff" stroke-width="1.2"/></svg>
<svg style="left:762.2px;top:138px;" width="15" height="14" viewBox="0 0 15 14"><rect x="1.8" y="9.8" width="3.2" height="3.2" fill="#ffffff"/><path d="M6.4 8.6L12.6 2.6" stroke="#ffffff" stroke-width="1.6"/><path d="M8.2 2H13.2V7Z" fill="#ffffff"/></svg>
<svg style="left:826.6px;top:139px;" width="17" height="13" viewBox="0 0 17 13"><rect x="1.6" y="1.8" width="10.2" height="9.4" rx="1" fill="none" stroke="#d0d0d0" stroke-width="1.3"/><path d="M11.8 6.5L15.2 3.4V9.6Z" fill="none" stroke="#d0d0d0" stroke-width="1.2"/></svg>
<svg style="left:266.6px;top:572.5px;" width="12.4" height="15.5" viewBox="0 0 12.4 15.5"><path d="M0 1.6H2.2V0H3.6V1.6H5.4V0H6.8V1.6H8.8V0H10.2V1.6H12.4V15.5H0Z" fill="#c8c8c8"/><path d="M2.2 6.2L5.2 8.6L2.2 11" fill="none" stroke="#242424" stroke-width="1.4"/><path d="M6 11.6H10.2" stroke="#242424" stroke-width="1.4"/></svg>
<svg style="left:426.0px;top:572.0px;" width="23.1" height="23.1" viewBox="0 0 23.1 23.1"><circle cx="7.800000000000011" cy="7.7999999999999545" r="5.8" fill="none" stroke="#c0c0c0" stroke-width="1.5"/><line x1="11.90" y1="11.90" x2="15.79" y2="15.79" stroke="#c0c0c0" stroke-width="1.8" stroke-linecap="round"/></svg>
<svg style="left:557.4px;top:574.4px;" width="12" height="12" viewBox="0 0 12 12"><path d="M2.7 2.7L9.3 9.3M9.3 2.7L2.7 9.3" stroke="#c0c0c0" stroke-width="1.6" fill="none"/></svg>
<svg style="left:274.2px;top:604.3px;" width="22.5" height="22.5" viewBox="0 0 22.5 22.5"><circle cx="7.5" cy="7.5" r="5.5" fill="none" stroke="#c0c0c0" stroke-width="1.5"/><line x1="11.39" y1="11.39" x2="15.28" y2="15.28" stroke="#c0c0c0" stroke-width="1.8" stroke-linecap="round"/></svg>
<svg style="left:826px;top:604px;" width="16" height="16" viewBox="0 0 16 16"><path d="M2.6 3.4Q2.6 1.6 4.2 1.6H5.4Q7 1.6 7 3.4V14H1V9.6Q1 6 2.6 3.4Z" fill="#ffffff"/><path d="M9 3.4Q9 1.6 10.6 1.6H11.8Q13.4 1.6 13.4 3.4Q15 6 15 9.6V14H9Z" fill="#ffffff"/><rect x="6.4" y="5.6" width="3.2" height="3.4" fill="#ffffff"/><rect x="3.6" y="0.6" width="2.4" height="1.6" fill="#ffffff"/><rect x="10" y="0.6" width="2.4" height="1.6" fill="#ffffff"/></svg>
<svg style="left:877.6px;top:108.4px;" width="19" height="18" viewBox="0 0 19 18"><path d="M0.6 0.6H8.4M0.6 4.5H5M12 8H18M9.4 12.3H18M5.4 16.4H18" stroke="#8a8a8a" stroke-width="1.2" fill="none"/><path d="M13.6 0.4L17.4 3.6L6.6 14.4L2.6 11.4Z" fill="#ffffff"/><path d="M1.9 12.6L5.4 15.4L0.2 17.4Z" fill="#ffffff"/></svg>
<svg style="left:1008.8px;top:110.6px;" width="12" height="12" viewBox="0 0 12 12"><path d="M2.7 2.7L9.3 9.3M9.3 2.7L2.7 9.3" stroke="#c0c0c0" stroke-width="1.6" fill="none"/></svg>
<svg style="left:885.3px;top:140.5px;" width="22.5" height="22.5" viewBox="0 0 22.5 22.5"><circle cx="7.5" cy="7.5" r="5.5" fill="none" stroke="#c0c0c0" stroke-width="1.5"/><line x1="11.39" y1="11.39" x2="15.28" y2="15.28" stroke="#c0c0c0" stroke-width="1.8" stroke-linecap="round"/></svg>
<svg style="left:1234px;top:142px;" width="14.4" height="14.4" viewBox="0 0 14.4 14.4"><rect width="14.4" height="14.4" rx="1" fill="#d0d0d0"/><rect x="2" y="2.4" width="10.4" height="1.8" fill="#202020"/><rect x="2" y="6.2" width="4" height="1.8" fill="#202020"/><rect x="8.2" y="6.2" width="4.2" height="1.8" fill="#202020"/><rect x="2" y="10" width="4" height="1.8" fill="#202020"/><rect x="8.2" y="10" width="4.2" height="1.8" fill="#202020"/></svg>
<svg style="left:1256.1px;top:139.9px;" width="17.8" height="17.8" viewBox="0 0 17.8 17.8"><g transform="translate(8.9 8.9) scale(0.8494623655913979)"><rect x="-1.35" y="-9.3" width="2.7" height="3.6" rx="0.5" fill="#c8c8c8" transform="rotate(0.0)"/><rect x="-1.35" y="-9.3" width="2.7" height="3.6" rx="0.5" fill="#c8c8c8" transform="rotate(45.0)"/><rect x="-1.35" y="-9.3" width="2.7" height="3.6" rx="0.5" fill="#c8c8c8" transform="rotate(90.0)"/><rect x="-1.35" y="-9.3" width="2.7" height="3.6" rx="0.5" fill="#c8c8c8" transform="rotate(135.0)"/><rect x="-1.35" y="-9.3" width="2.7" height="3.6" rx="0.5" fill="#c8c8c8" transform="rotate(180.0)"/><rect x="-1.35" y="-9.3" width="2.7" height="3.6" rx="0.5" fill="#c8c8c8" transform="rotate(225.0)"/><rect x="-1.35" y="-9.3" width="2.7" height="3.6" rx="0.5" fill="#c8c8c8" transform="rotate(270.0)"/><rect x="-1.35" y="-9.3" width="2.7" height="3.6" rx="0.5" fill="#c8c8c8" transform="rotate(315.0)"/><circle r="5.7" fill="none" stroke="#c8c8c8" stroke-width="1.7"/><circle r="2.9" fill="none" stroke="#8a8a8a" stroke-width="1.2"/></g></svg>
<svg style="left:879.4px;top:177.6px;" width="10.200000000000045" height="6.599999999999994" viewBox="0 0 10.200000000000045 6.599999999999994"><path d="M0 0H10.200000000000045L5.100000000000023 6.599999999999994Z" fill="#808080"/></svg>
<svg style="left:1227.6px;top:205.6px;" width="13.0" height="8.700000000000017" viewBox="0 0 13.0 8.700000000000017"><path d="M2 2L6.5 6.700000000000017L11.0 2" fill="none" stroke="#d4d4d4" stroke-width="1.6" stroke-linecap="round" stroke-linejoin="round"/></svg>
<svg style="left:1130.8px;top:224.2px;" width="20" height="20" viewBox="0 0 20 20"><path d="M15.67 5.57A7.2 7.2 0 1 0 15.67 14.43" fill="none" stroke="#c8c8c8" stroke-width="1.5"/><path d="M17.6 10H6.6M10.2 6.2L6.2 10L10.2 13.8" fill="none" stroke="#c8c8c8" stroke-width="1.7"/></svg>
<svg style="left:1159px;top:226.2px;" width="19.200000000000003" height="19.200000000000003" viewBox="0 0 24 24"><path d="M0 0.6Q0 0 0.6 0H6.3L9.7 4H0Z" fill="#c8c8c8"/><path d="M0 4.8H18.4Q19 4.8 19 5.4V17.3H0.6Q0 17.3 0 16.7Z" fill="#c8c8c8"/><circle cx="15.1" cy="11.9" r="5.8" fill="#242424"/><path d="M11.6 15.6L7.8 20" stroke="#242424" stroke-width="3.6" stroke-linecap="round"/><circle cx="15.1" cy="11.9" r="4.1" fill="#242424" stroke="#d8d8d8" stroke-width="1.3"/><path d="M12.2 15.2L8.6 19.2" stroke="#d8d8d8" stroke-width="1.6" stroke-linecap="round"/></svg>
<svg style="left:1261px;top:218px;" width="13" height="11" viewBox="0 0 13 11"><path d="M4.4 0.8L1 4.2L4.4 7.6" fill="none" stroke="#c8c8c8" stroke-width="1.5"/><path d="M1.2 4.2H7.4Q11 4.2 11 7.4Q11 9.6 8.6 9.8" fill="none" stroke="#c8c8c8" stroke-width="1.5"/></svg>
<svg style="left:1227.6px;top:263.6px;" width="13.0" height="8.699999999999989" viewBox="0 0 13.0 8.699999999999989"><path d="M2 2L6.5 6.699999999999989L11.0 2" fill="none" stroke="#d4d4d4" stroke-width="1.6" stroke-linecap="round" stroke-linejoin="round"/></svg>
<svg style="left:1130.8px;top:282.2px;" width="20" height="20" viewBox="0 0 20 20"><path d="M15.67 5.57A7.2 7.2 0 1 0 15.67 14.43" fill="none" stroke="#c8c8c8" stroke-width="1.5"/><path d="M17.6 10H6.6M10.2 6.2L6.2 10L10.2 13.8" fill="none" stroke="#c8c8c8" stroke-width="1.7"/></svg>
<svg style="left:1159px;top:284.2px;" width="19.200000000000003" height="19.200000000000003" viewBox="0 0 24 24"><path d="M0 0.6Q0 0 0.6 0H6.3L9.7 4H0Z" fill="#c8c8c8"/><path d="M0 4.8H18.4Q19 4.8 19 5.4V17.3H0.6Q0 17.3 0 16.7Z" fill="#c8c8c8"/><circle cx="15.1" cy="11.9" r="5.8" fill="#242424"/><path d="M11.6 15.6L7.8 20" stroke="#242424" stroke-width="3.6" stroke-linecap="round"/><circle cx="15.1" cy="11.9" r="4.1" fill="#242424" stroke="#d8d8d8" stroke-width="1.3"/><path d="M12.2 15.2L8.6 19.2" stroke="#d8d8d8" stroke-width="1.6" stroke-linecap="round"/></svg>
<svg style="left:1261px;top:276px;" width="13" height="11" viewBox="0 0 13 11"><path d="M4.4 0.8L1 4.2L4.4 7.6" fill="none" stroke="#c8c8c8" stroke-width="1.5"/><path d="M1.2 4.2H7.4Q11 4.2 11 7.4Q11 9.6 8.6 9.8" fill="none" stroke="#c8c8c8" stroke-width="1.5"/></svg>
<svg style="left:1076px;top:263.8px;" width="36" height="36" viewBox="0 0 36 36"><defs><linearGradient id="tg" x1="0" y1="0" x2="0" y2="1"><stop offset="0" stop-color="#5e5e5e"/><stop offset="1" stop-color="#383838"/></linearGradient></defs><rect x="0.5" y="0.5" width="35" height="35" fill="url(#tg)" stroke="#a0a0a0" stroke-width="1"/><rect x="6" y="21.2" width="6" height="11.8" fill="#8c8c8c"/><rect x="15" y="3.2" width="6.2" height="29.8" fill="#f4f4f4"/><rect x="24" y="12.2" width="6" height="20.8" fill="#8c8c8c"/></svg>
<svg style="left:13.8px;top:775.2px;" width="19.200000000000003" height="19.200000000000003" viewBox="0 0 24 24"><path d="M0 0.6Q0 0 0.6 0H6.3L9.7 4H0Z" fill="#808080"/><path d="M0 4.8H18.4Q19 4.8 19 5.4V17.3H0.6Q0 17.3 0 16.7Z" fill="#c8c8c8"/><circle cx="15.1" cy="11.9" r="5.8" fill="#242424"/><path d="M11.6 15.6L7.8 20" stroke="#242424" stroke-width="3.6" stroke-linecap="round"/><circle cx="15.1" cy="11.9" r="4.1" fill="#242424" stroke="#d8d8d8" stroke-width="1.3"/><path d="M12.2 15.2L8.6 19.2" stroke="#d8d8d8" stroke-width="1.6" stroke-linecap="round"/></svg>
<svg style="left:148px;top:775px;" width="11.8" height="15.6" viewBox="0 0 12.4 15.5"><path d="M0 1.6H2.2V0H3.6V1.6H5.4V0H6.8V1.6H8.8V0H10.2V1.6H12.4V15.5H0Z" fill="#c8c8c8"/><path d="M2.2 6.2L5.2 8.6L2.2 11" fill="none" stroke="#242424" stroke-width="1.4"/><path d="M6 11.6H10.2" stroke="#242424" stroke-width="1.4"/></svg>
<svg style="left:253.5px;top:777px;" width="17" height="13" viewBox="0 0 17 13"><rect x="0.7" y="0.7" width="15.6" height="11.6" fill="none" stroke="#c8c8c8" stroke-width="1.3"/><path d="M3.4 4L6 6.2L3.4 8.4M7.4 9.2H11.4" fill="none" stroke="#c8c8c8" stroke-width="1.2"/></svg>
<svg style="left:305.4px;top:778.6px;" width="13.0" height="8.600000000000023" viewBox="0 0 13.0 8.600000000000023"><path d="M2 2L6.5 6.600000000000023L11.0 2" fill="none" stroke="#c0c0c0" stroke-width="1.5" stroke-linecap="round" stroke-linejoin="round"/></svg>
<svg style="left:1022px;top:775.5px;" width="17" height="16" viewBox="0 0 17 16"><path d="M0.6 0.6H10L12.6 3.2V12.6H0.6Z" fill="#9a9a9a"/><rect x="2.8" y="0.6" width="6.4" height="4.4" fill="#d0d0d0"/><rect x="2.8" y="7.8" width="7.4" height="4.8" fill="#d0d0d0"/><circle cx="12.2" cy="11.6" r="4.2" fill="#242424"/><text x="12.2" y="17.8" text-anchor="middle" font-family="Liberation Sans, sans-serif" font-weight="700" font-size="13" fill="#d8d8d8">*</text></svg>
<svg style="left:1132px;top:776px;" width="15" height="15" viewBox="0 0 15 15"><circle cx="3.4" cy="2.8" r="2" fill="#c0c0c0"/><circle cx="11.4" cy="2.8" r="2" fill="#c0c0c0"/><circle cx="3.4" cy="12" r="2" fill="#c0c0c0"/><path d="M3.4 3V12M11.4 3V5Q11.4 7.4 9 7.4H5.8Q3.4 7.4 3.4 9.6" fill="none" stroke="#c0c0c0" stroke-width="1.3"/></svg>
<svg style="left:1250.6px;top:778.8px;" width="13.0" height="8.5" viewBox="0 0 13.0 8.5"><path d="M2 2L6.5 6.5L11.0 2" fill="none" stroke="#c0c0c0" stroke-width="1.5" stroke-linecap="round" stroke-linejoin="round"/></svg>
</div></body></html>
